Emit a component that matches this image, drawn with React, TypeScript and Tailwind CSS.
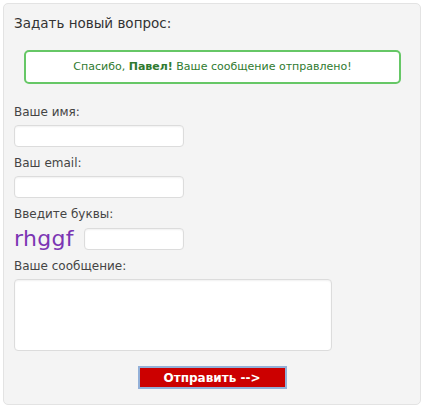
export default function App() {
  const inputCls =
    "block h-[22px] bg-white border border-[#dcdcdc] rounded-[4px] shadow-[inset_0_1px_2px_rgba(0,0,0,0.06)] outline-none";
  const labelCls = "text-[12px] leading-[14px] text-[#444]";
  return (
    <div className="w-[424px] h-[409px] bg-white pt-[3px] pl-[3px]" style={{ fontFamily: '"DejaVu Sans", Verdana, sans-serif' }}>
      <div className="w-[418px] h-[402px] bg-[#f4f4f4] border border-[#e3e3e3] rounded-[5px] pt-[11px] pl-[10px] pr-[10px]">
        <div className="text-[13.5px] leading-[16px] text-[#333]">Задать новый вопрос:</div>
        <div className="mt-[19px] ml-[10px] mr-[9px] h-[34px] bg-white border-2 border-[#66c766] rounded-[5px] flex items-center justify-center text-[11px] text-[#2f7a2f]">
          <span>
            Спасибо, <b>Павел!</b> Ваше сообщение отправлено!
          </span>
        </div>
        <div className="mt-[21px] flex flex-col">
          <div className={labelCls}>Ваше имя:</div>
          <div className={inputCls + " mt-[6px] w-[170px]"} />
          <div className={labelCls + " mt-[9px]"}>Ваш email:</div>
          <div className={inputCls + " mt-[6px] w-[170px]"} />
          <div className={labelCls + " mt-[9px]"}>Введите буквы:</div>
          <div className="mt-[6px] h-[24px] flex items-center">
            <span className="text-[22px] leading-[24px] text-[#7b35b3] w-[70px] tracking-[0.3px]">rhggf</span>
            <div className={inputCls + " w-[100px]"} />
          </div>
          <div className={labelCls + " mt-[8px]"}>Ваше сообщение:</div>
          <div className={inputCls + " mt-[6px] w-[318px] h-[72px]"} />
          <div className="mt-[15px] flex justify-center">
            <div className="w-[149px] h-[23px] bg-[#cc0000] border-2 border-[#93b0d8] flex items-center justify-center text-white font-bold text-[12px]">
              Отправить --&gt;
            </div>
          </div>
        </div>
      </div>
    </div>
  );
}
